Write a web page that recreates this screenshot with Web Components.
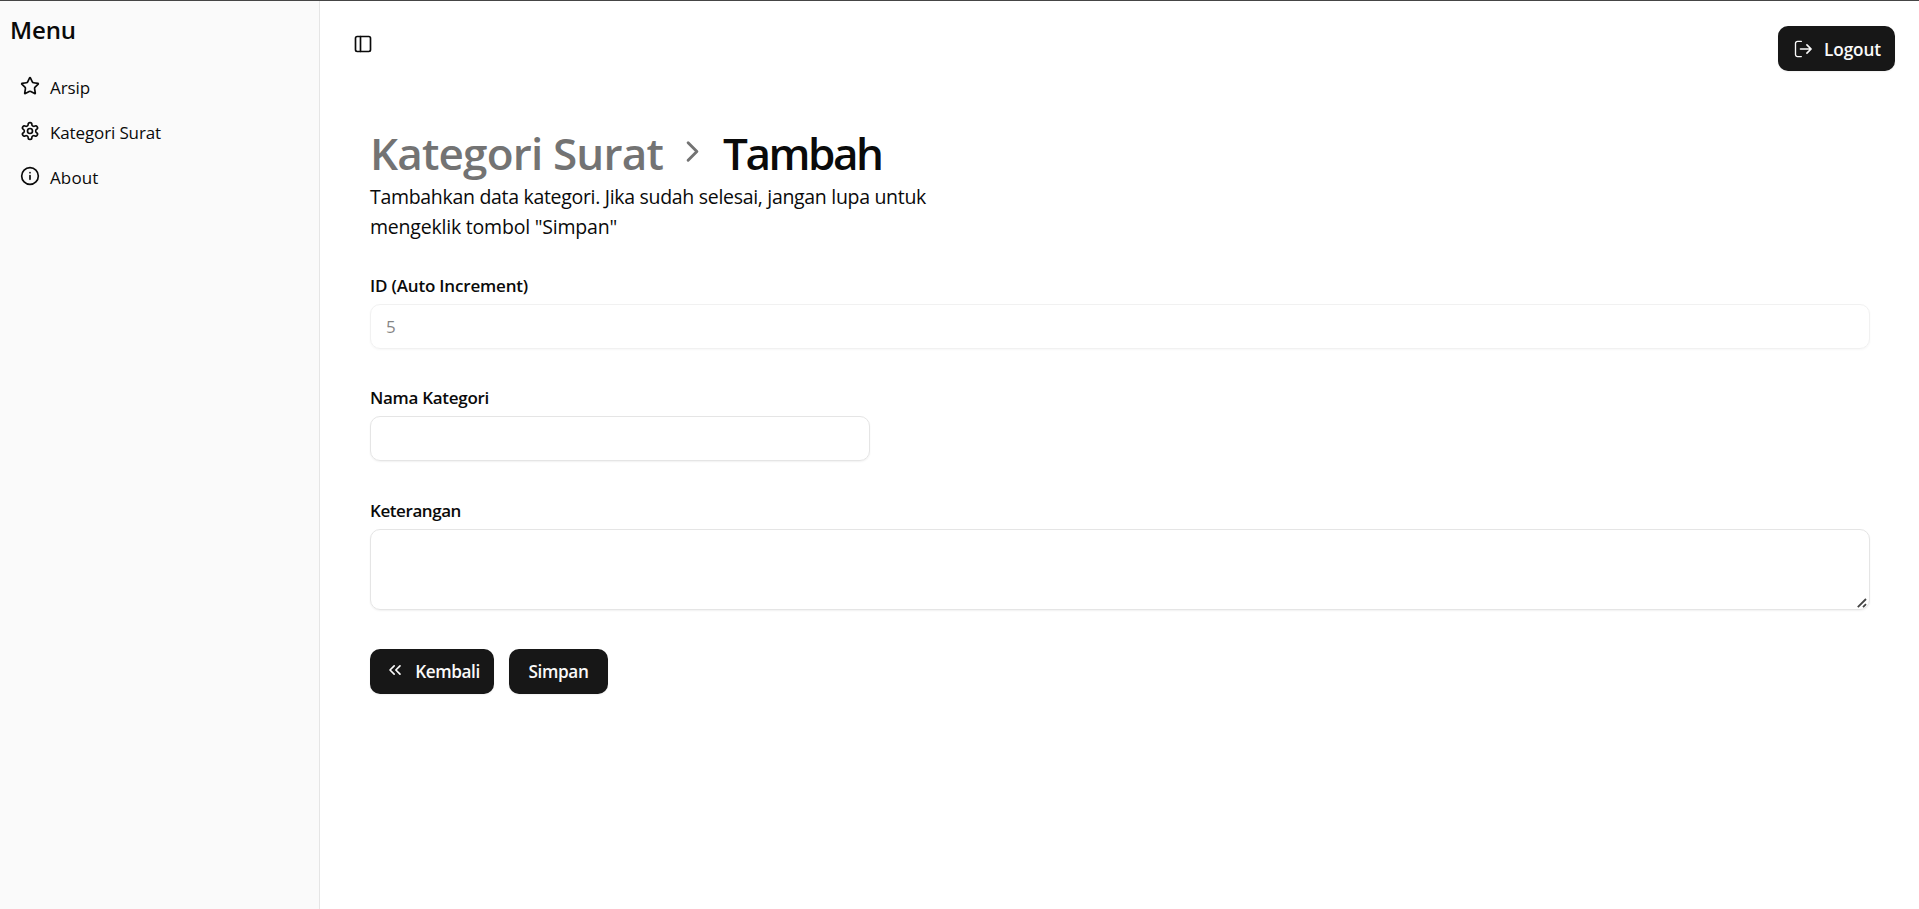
<!DOCTYPE html>
<html lang="id">
<head>
<meta charset="utf-8">
<title>Kategori Surat</title>
<style>
html,body{margin:0;height:100%}
body{font-family:"Open Sans","Noto Sans",sans-serif;color:#0a0a0a;background:#fff;overflow:hidden}
</style>
</head>
<body>
<archive-app></archive-app>
<script>
const define=(name,html,ready)=>{
  const t=document.createElement('template');t.innerHTML=html;
  customElements.define(name,class extends HTMLElement{
    connectedCallback(){
      if(this.shadowRoot)return;
      this.attachShadow({mode:'open'}).append(t.content.cloneNode(true));
      if(ready)ready(this,this.shadowRoot);
    }
  });
};

/* Single line of text whose tracking is set so that it spans the given width */
define('tracked-text','<style>:host{display:block;white-space:nowrap}span{display:inline-block}</style><span><slot></slot></span>',(el,root)=>{
  const s=root.querySelector('span'),n=el.textContent.length,w=+el.getAttribute('width');
  const fit=()=>{
    s.style.letterSpacing='0';
    const cur=s.getBoundingClientRect().width;
    if(cur)s.style.letterSpacing=((w-cur)/n)+'px';
    el.style.width=w+'px';
  };
  fit();
  document.addEventListener('DOMContentLoaded',fit);
});

const icons={
  star:'<path d="M11.525 2.295a.53.53 0 0 1 .95 0l2.31 4.679a2.123 2.123 0 0 0 1.595 1.16l5.166.756a.53.53 0 0 1 .294.904l-3.736 3.638a2.123 2.123 0 0 0-.611 1.878l.882 5.14a.53.53 0 0 1-.771.56l-4.618-2.428a2.122 2.122 0 0 0-1.973 0L6.396 21.01a.53.53 0 0 1-.77-.56l.881-5.139a2.122 2.122 0 0 0-.611-1.879L2.16 9.795a.53.53 0 0 1 .294-.906l5.165-.755a2.122 2.122 0 0 0 1.597-1.16z"/>',
  gear:'<path d="M12.22 2h-.44a2 2 0 0 0-2 2v.18a2 2 0 0 1-1 1.73l-.43.25a2 2 0 0 1-2 0l-.15-.08a2 2 0 0 0-2.73.73l-.22.38a2 2 0 0 0 .73 2.73l.15.1a2 2 0 0 1 1 1.72v.51a2 2 0 0 1-1 1.74l-.15.09a2 2 0 0 0-.73 2.73l.22.38a2 2 0 0 0 2.73.73l.15-.08a2 2 0 0 1 2 0l.43.25a2 2 0 0 1 1 1.73V20a2 2 0 0 0 2 2h.44a2 2 0 0 0 2-2v-.18a2 2 0 0 1 1-1.73l.43-.25a2 2 0 0 1 2 0l.15.08a2 2 0 0 0 2.73-.73l.22-.39a2 2 0 0 0-.73-2.73l-.15-.08a2 2 0 0 1-1-1.74v-.5a2 2 0 0 1 1-1.74l.15-.09a2 2 0 0 0 .73-2.73l-.22-.38a2 2 0 0 0-2.73-.73l-.15.08a2 2 0 0 1-2 0l-.43-.25a2 2 0 0 1-1-1.73V4a2 2 0 0 0-2-2z"/><circle cx="12" cy="12" r="3"/>',
  info:'<circle cx="12" cy="12" r="10"/><path d="M12 16v-4.5M12 8v.01"/>',
  panel:'<rect x="3" y="3" width="18" height="18" rx="2"/><path d="M9 3v18"/>',
  logout:'<path stroke-width="1.6" d="M10 2.9H5.4a2.4 2.4 0 0 0-2.4 2.4v13.4a2.4 2.4 0 0 0 2.4 2.4H10"/><path d="M9 12h12.5M16.7 7l5 5-5 5"/>',
  back:'<path d="m11 17-5-5 5-5M18 17l-5-5 5-5"/>',
  chevron:'<path d="m9 18 6-6-6-6"/>'
};
define('line-icon','<style>:host{display:block;flex:none;width:var(--size,20px);height:var(--size,20px)}svg{display:block;width:100%;height:100%;overflow:visible}</style><svg viewBox="0 0 24 24" fill="none" stroke="currentColor" stroke-width="2" stroke-linecap="round" stroke-linejoin="round"></svg>',(el,root)=>{
  root.querySelector('svg').innerHTML=icons[el.getAttribute('name')];
});

define('nav-item',`<style>
:host{display:flex;align-items:center;height:40px;padding:0 10px;gap:10px;font-size:17px;line-height:25px}
::slotted(line-icon){margin-bottom:3px}
</style><slot name="icon"></slot><slot></slot>`);

define('side-bar',`<style>
:host{display:block;box-sizing:border-box;width:320px;background:#fafafa;border-right:1px solid #e5e5e5;padding:11px 10px}
.title{font-size:24px;font-weight:600;line-height:35px}
nav{display:flex;flex-direction:column;gap:5px;padding-top:20px}
</style>
<tracked-text class="title" width="66">Menu</tracked-text>
<nav>
<nav-item><line-icon slot="icon" name="star"></line-icon><tracked-text width="40">Arsip</tracked-text></nav-item>
<nav-item><line-icon slot="icon" name="gear"></line-icon><tracked-text width="111">Kategori Surat</tracked-text></nav-item>
<nav-item><line-icon slot="icon" name="info"></line-icon><tracked-text width="48.5">About</tracked-text></nav-item>
</nav>`);

define('action-button',`<style>
:host{display:block}
button{all:unset;box-sizing:border-box;display:flex;align-items:center;justify-content:center;width:100%;height:45px;padding:var(--pad,0 15px);gap:10px;border-radius:10px;background:#171717;color:#fafafa;font-size:17.2px;font-weight:600;line-height:25px;box-shadow:0 1px 2px rgba(0,0,0,.06)}
::slotted(tracked-text){padding-top:1px}
</style><button type="button"><slot name="icon"></slot><slot></slot></button>`);

define('top-bar',`<style>
:host{display:flex;justify-content:space-between;align-items:flex-start;padding:25px 24px 0 33px}
line-icon{margin-top:8px}
action-button{--pad:0 14px 0 15px;width:117px}
action-button line-icon{margin:0 1px 0 0}
</style>
<line-icon name="panel"></line-icon>
<action-button><line-icon slot="icon" name="logout"></line-icon><tracked-text width="57">Logout</tracked-text></action-button>`);

define('page-heading',`<style>
:host{display:block}
h1{display:flex;align-items:center;margin:0;height:56px;font-size:44px;font-weight:600;line-height:56px}
.parent,line-icon{color:#737373}
line-icon{--size:35px;margin:0 13px 3px 12px}
p{margin:1px 0 0;font-size:19.5px;line-height:30px}
</style>
<h1><tracked-text class="parent" width="293">Kategori Surat</tracked-text><line-icon name="chevron"></line-icon><tracked-text width="158.5">Tambah</tracked-text></h1>
<p><tracked-text width="556">Tambahkan data kategori. Jika sudah selesai, jangan lupa untuk</tracked-text><tracked-text width="247">mengeklik tombol "Simpan"</tracked-text></p>`);

define('form-field',`<style>
:host{display:flex;flex-direction:column;gap:6px}
label{font-size:17px;font-weight:600;line-height:25px}
input,textarea{display:block;box-sizing:border-box;width:100%;height:45px;margin:0;padding:5px 15px;border:1px solid #e5e5e5;border-radius:10px;background:transparent;color:inherit;font:17px/25px "Open Sans","Noto Sans",sans-serif;outline:0;box-shadow:0 1px 2px rgba(0,0,0,.06)}
input:disabled{opacity:.5}
.area{position:relative}
textarea{height:81px;resize:none}
.grip{position:absolute;right:3px;bottom:2px;width:10px;height:10px}
</style><label><slot></slot></label><div class="box"></div>`,(el,root)=>{
  const box=root.querySelector('.box');
  if(el.hasAttribute('multiline')){
    box.className='area';
    box.innerHTML='<textarea></textarea><svg class="grip" viewBox="0 0 10 10" fill="none" stroke="#444" stroke-width="1.8"><path d="M.8 9.2 9 1M6 9.2 9 6.2"/></svg>';
  }else{
    const i=document.createElement('input');
    i.value=el.getAttribute('value')||'';
    i.disabled=el.hasAttribute('locked');
    box.append(i);
  }
});

define('category-form',`<style>
:host{display:flex;flex-direction:column;gap:36.4px}
.short{width:500px}
form-field[multiline]{margin-bottom:2.8px}
.actions{display:flex;gap:15px}
.back{width:124px;--pad:0 14px 0 15px}
.save{width:99px}
</style>
<form-field value="5" locked><tracked-text width="158">ID (Auto Increment)</tracked-text></form-field>
<form-field class="short"><tracked-text width="119">Nama Kategori</tracked-text></form-field>
<form-field multiline><tracked-text width="91">Keterangan</tracked-text></form-field>
<div class="actions">
<action-button class="back"><line-icon slot="icon" name="back" style="margin-bottom:2px"></line-icon><tracked-text width="64.5">Kembali</tracked-text></action-button>
<action-button class="save"><tracked-text width="60">Simpan</tracked-text></action-button>
</div>`);

define('archive-app',`<style>
:host{display:grid;grid-template-columns:320px 1fr;box-sizing:border-box;height:100vh;border-top:1px solid #454545}
main{display:block;padding:54px 49px 0 50px}
category-form{padding-top:31px}
</style>
<side-bar></side-bar>
<div><top-bar></top-bar><main><page-heading></page-heading><category-form></category-form></main></div>`);
</script>
</body>
</html>
